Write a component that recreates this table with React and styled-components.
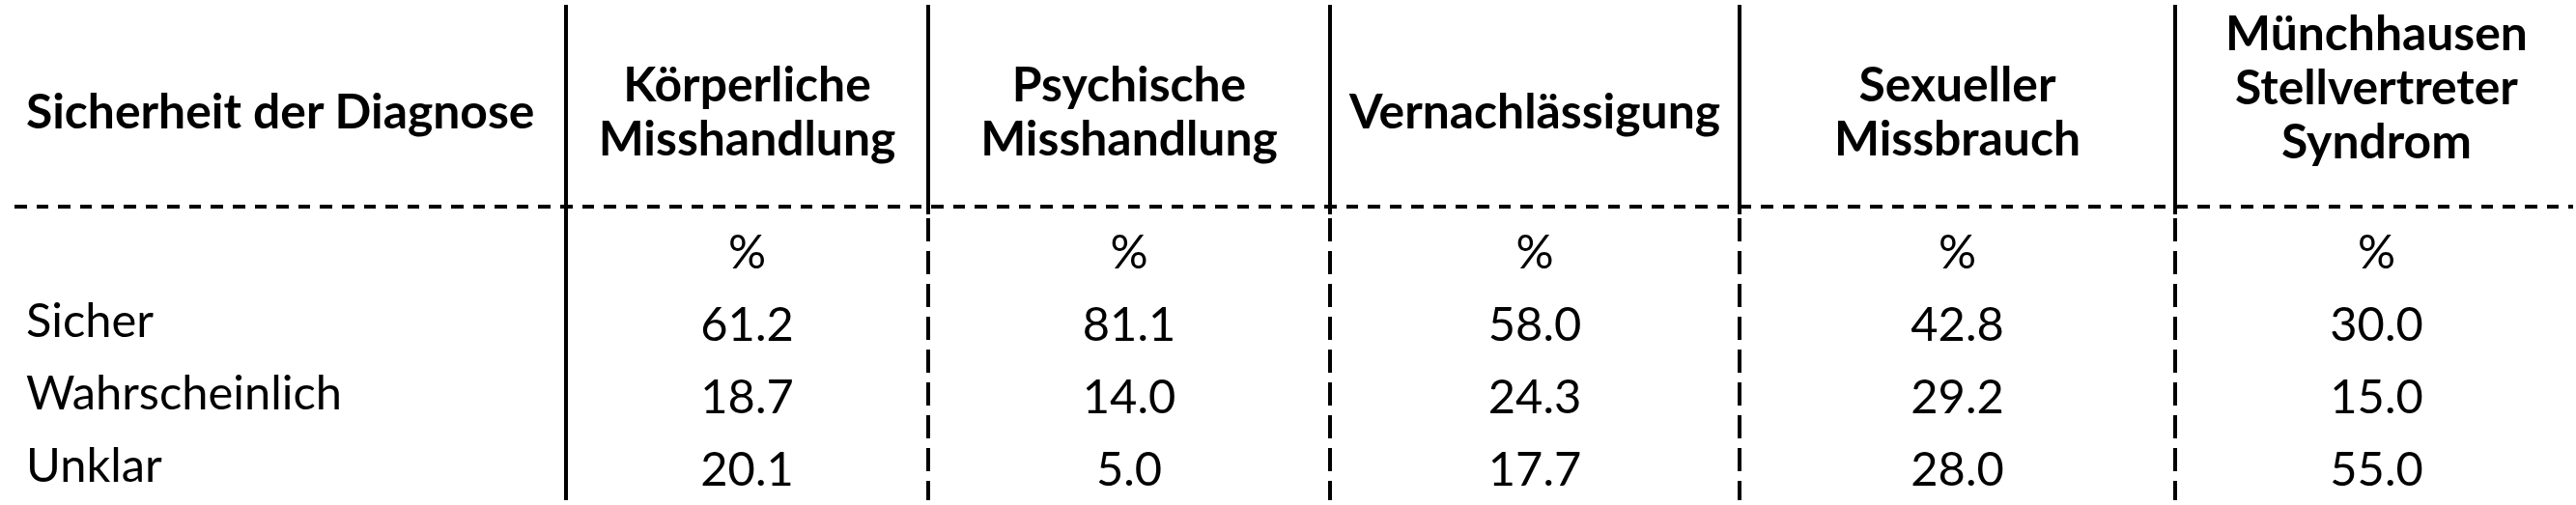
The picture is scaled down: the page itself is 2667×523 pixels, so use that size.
import React from 'react';
import styled, { createGlobalStyle } from 'styled-components';

const GlobalStyle = createGlobalStyle`
  body {
    margin: 0;
    background: #fff;
  }
`;

const COLUMNS = '584px 375px 416px 424px 451px 1fr';

const Sheet = styled.div`
  width: 2667px;
  padding-top: 5px;
  color: #000;
  font-family: Lato, 'Open Sans', sans-serif;
  font-size: 48.8px;
`;

const HeaderRow = styled.div`
  display: grid;
  grid-template-columns: ${COLUMNS};
  height: 207px;
`;

const HeaderCell = styled.div`
  display: flex;
  align-items: ${(p) => (p.$align === 'end' ? 'flex-end' : 'center')};
  justify-content: ${(p) => (p.$left ? 'flex-start' : 'center')};
  padding: ${(p) => (p.$align === 'end' ? '0 0 49px' : '0')};
  padding-left: ${(p) => (p.$left ? '27px' : '0')};
  border-left: ${(p) => (p.$left ? 'none' : '4px solid #000')};
  font-size: 49.8px;
  font-weight: 700;
  line-height: 56px;
  text-align: ${(p) => (p.$left ? 'left' : 'center')};
  white-space: nowrap;
`;

const Separator = styled.div`
  height: 4px;
  margin: 0 3px 0 15px;
  background: repeating-linear-gradient(
    to right,
    #000 0 12.7px,
    transparent 12.7px 22.6px
  );
`;

const Body = styled.div`
  display: grid;
  grid-template-columns: ${COLUMNS};
`;

const BodyColumn = styled.div`
  display: flex;
  flex-direction: column;
  padding-top: 6px;
  padding-left: ${(p) => (p.$label ? '27px' : '4px')};
  height: 296px;
  background-repeat: no-repeat;
  background-size: 4px 100%;
  background-image: ${(p) =>
    p.$label
      ? 'none'
      : p.$solid
      ? 'linear-gradient(#000, #000)'
      : 'repeating-linear-gradient(to bottom, transparent 0 10px, #000 10px 34px)'};
`;

const Cell = styled.div`
  height: 75px;
  line-height: 75px;
  text-align: ${(p) => (p.$label ? 'left' : 'center')};
  white-space: nowrap;
`;

const headers = [
  { lines: ['Körperliche', 'Misshandlung'] },
  { lines: ['Psychische', 'Misshandlung'] },
  { lines: ['Vernachlässigung'] },
  { lines: ['Sexueller', 'Missbrauch'] },
  { lines: ['Münchhausen', 'Stellvertreter', 'Syndrom'], align: 'end' },
];

const labels = ['', 'Sicher', 'Wahrscheinlich', 'Unklar'];

const values = [
  ['61.2', '18.7', '20.1'],
  ['81.1', '14.0', '5.0'],
  ['58.0', '24.3', '17.7'],
  ['42.8', '29.2', '28.0'],
  ['30.0', '15.0', '55.0'],
];

const App = () => {
  return (
    <>
      <GlobalStyle />
      <Sheet>
        <HeaderRow>
          <HeaderCell $left>Sicherheit der Diagnose</HeaderCell>
          {headers.map((h, i) => (
            <HeaderCell key={i} $align={h.align}>
              <div>
                {h.lines.map((line, j) => (
                  <div key={j}>{line}</div>
                ))}
              </div>
            </HeaderCell>
          ))}
        </HeaderRow>
        <Separator />
        <Body>
          <BodyColumn $label>
            {labels.map((label, i) => (
              <Cell key={i} $label>
                {label}
              </Cell>
            ))}
          </BodyColumn>
          {values.map((col, i) => (
            <BodyColumn key={i} $solid={i === 0}>
              <Cell>%</Cell>
              {col.map((v, j) => (
                <Cell key={j}>{v}</Cell>
              ))}
            </BodyColumn>
          ))}
        </Body>
      </Sheet>
    </>
  );
};

export default App;
